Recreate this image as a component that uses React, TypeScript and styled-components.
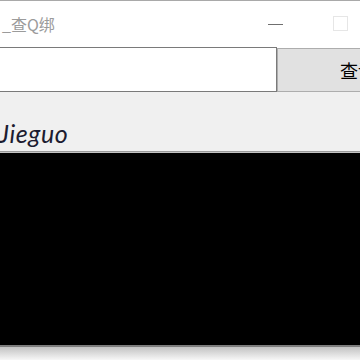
import React from "react";
import styled, { createGlobalStyle } from "styled-components";

const Global = createGlobalStyle`
  html, body { margin: 0; padding: 0; background: #f0f0f0; }
  body { width: 360px; height: 360px; overflow: hidden; }
`;

const Window = styled.div`
  width: 360px;
  height: 360px;
  display: flex;
  flex-direction: column;
  background: #f0f0f0;
  border-top: 1px solid #a9a9a9;
  box-sizing: border-box;
  overflow: hidden;
`;

const TitleBar = styled.div`
  height: 46px;
  flex: none;
  background: #ffffff;
  display: flex;
  align-items: center;
  font-family: "Noto Sans CJK SC", "Noto Sans", sans-serif;
`;

const Title = styled.div`
  font-size: 16px;
  color: #9b9b9b;
  padding-left: 2px;
  flex: 1;
  white-space: nowrap;
  line-height: 16px;
`;

const Minimize = styled.div`
  width: 15px;
  height: 1px;
  background: #6f6f6f;
  margin-right: 50px;
`;

const Maximize = styled.div`
  width: 13px;
  height: 13px;
  border: 1px solid #e6e6e6;
  margin-right: 12px;
  margin-top: -1px;
`;

const SearchRow = styled.div`
  height: 45px;
  flex: none;
  display: flex;
  background: #ffffff;
`;

const Input = styled.div`
  width: 277px;
  height: 45px;
  box-sizing: border-box;
  border: 1px solid #7a7a7a;
  border-left: none;
  background: #ffffff;
  flex: none;
`;

const Button = styled.div`
  flex: 1;
  height: 44px;
  margin-top: 1px;
  box-sizing: border-box;
  border: 1px solid #adadad;
  border-right: none;
  background: #e1e1e1;
  display: flex;
  align-items: center;
  padding-left: 62px;
  padding-bottom: 1px;
  font-family: "Noto Sans CJK SC", sans-serif;
  font-size: 18px;
  color: #000;
  white-space: nowrap;
  overflow: hidden;
`;

const LabelArea = styled.div`
  height: 59px;
  flex: none;
  display: flex;
  align-items: flex-end;
  padding-bottom: 4px;
  box-sizing: border-box;
`;

const Label = styled.div`
  font-family: "Lato", "DejaVu Sans", sans-serif;
  font-style: italic;
  font-size: 25px;
  color: #1c1c30;
  letter-spacing: 0.6px;
  margin-left: -1px;
  line-height: 28px;
`;

const Separator = styled.div`
  height: 2px;
  flex: none;
  background: linear-gradient(#9a9a9a 50%, #c4c4c4 50%);
`;

const Output = styled.div`
  height: 192px;
  flex: none;
  background: #000000;
`;

const BottomEdge = styled.div`
  flex: 1;
  border-top: 2px solid #7d7d7d;
  background: linear-gradient(#c2c2c2, #f7f7f7);
`;

export default function App() {
  return (
    <>
      <Global />
      <Window>
        <TitleBar>
          <Title>_查Q绑</Title>
          <Minimize />
          <Maximize />
        </TitleBar>
        <SearchRow>
          <Input />
          <Button>查询</Button>
        </SearchRow>
        <LabelArea>
          <Label>Jieguo</Label>
        </LabelArea>
        <Separator />
        <Output />
        <BottomEdge />
      </Window>
    </>
  );
}
